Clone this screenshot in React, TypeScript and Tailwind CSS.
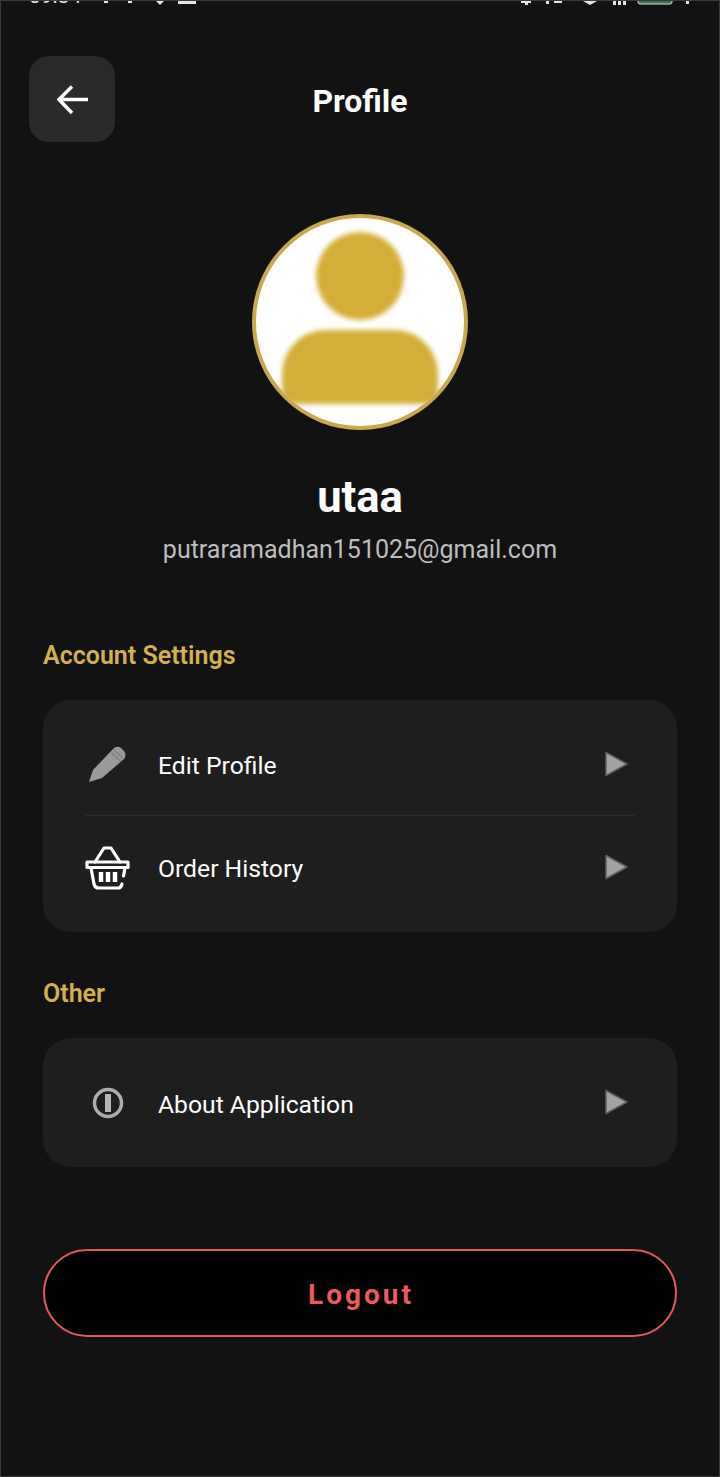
import { FC, ReactNode } from "react"

const Chevron = () => (
  <svg width="24" height="26" viewBox="0 0 24 26" className="shrink-0 mr-[7px] -mt-[2px]">
    <path d="M2 1.500 L23 13 L2 24.500 Z" fill="#a3a3a3" stroke="#5f5f5f" strokeWidth="1.500" strokeLinejoin="round" />
  </svg>
)

const PencilIcon = () => (
  <svg width="40" height="40" viewBox="0 0 40 40" className="-ml-[2px] -mt-[2px]">
    <path d="M2 38 L6 26 L26 5 Q30 1 34 4 L37 7 Q40 11 37 15 L15 34 Z" fill="#9a9a9a" />
    <path d="M27 6 L36 14 M24.500 9 L33.500 17" stroke="#828282" strokeWidth="1.500" fill="none" />
  </svg>
)

const BasketIcon = () => (
  <svg width="46" height="46" viewBox="0 0 46 46" fill="none" stroke="#fff" strokeWidth="3.200" strokeLinejoin="round" strokeLinecap="round">
    <path d="M10 17 L19 3 H26 L35 17" />
    <path d="M2 17 H43 V22.500 H2 Z" />
    <path d="M6 23 L9 39 Q10 43 14 43 H33 Q36 43 37 39 M38.500 31 L40 23" />
    <path d="M16 27 V37 M23 27 V37 M30 27 V37" strokeWidth="4.500" strokeLinecap="butt" />
  </svg>
)

const InfoIcon = () => (
  <svg width="32" height="32" viewBox="0 0 32 32" fill="none" className="-ml-[1px]">
    <circle cx="16" cy="16" r="13.500" stroke="#adadad" strokeWidth="3.500" />
    <rect x="13" y="7" width="6" height="18" fill="#b5b5b5" />
  </svg>
)

const StatusIconsLeft = () => (
  <svg width="110" height="5" viewBox="0 0 110 5" fill="#e5e5e5">
    <rect x="3" y="0" width="4" height="2" />
    <rect x="27" y="0" width="4" height="2" />
    <path d="M55 0 H63 L59 4 Z" />
    <rect x="77" y="0" width="18" height="3" />
  </svg>
)

const StatusIconsRight = () => (
  <svg width="170" height="5" viewBox="0 0 170 5" fill="#e5e5e5">
    <rect x="0" y="0" width="10" height="2" />
    <rect x="4" y="2" width="3" height="2" />
    <rect x="25" y="0" width="3" height="3" />
    <rect x="33" y="0" width="8" height="2" />
    <path d="M62 0 H76 L69 4 Z" />
    <rect x="92" y="0" width="3" height="4" />
    <rect x="97" y="0" width="3" height="4" />
    <rect x="102" y="0" width="3" height="4" />
    <path d="M117 0 V1 Q117 3 119 3 H149 Q151 3 151 1 V0" fill="#3f6f55" stroke="#cfe8d8" strokeWidth="1" />
    <rect x="165" y="0" width="3" height="3" />
  </svg>
)

const Row: FC<{ icon: ReactNode; label: string; className?: string }> = ({ icon, label, className }) => (
  <div className={`flex items-center ${className ?? ""}`}>
    <div className="w-[46px] flex justify-center shrink-0">{icon}</div>
    <span className="ml-[27px] flex-1 text-[24.700px] text-white pt-[2px]">{label}</span>
    <Chevron />
  </div>
)

export default function App() {
  return (
    <div
      className="w-[720px] h-[1477px] bg-[#121212] border border-[#3a3a3a] overflow-hidden flex flex-col"
      style={{ fontFamily: "Roboto, sans-serif" }}
    >
      {/* cut-off status bar */}
      <div className="h-[5px] overflow-hidden flex items-start px-[28px] text-[#e5e5e5] text-[21px] leading-[5px]">
        <span className="-mt-[7px] w-[72px]">09:34</span>
        <StatusIconsLeft />
        <span className="flex-1" />
        <StatusIconsRight />
      </div>

      <div className="relative mt-[50px] mx-[28px] flex items-center justify-center h-[86px]">
        <button className="absolute left-0 top-0 w-[86px] h-[86px] rounded-[20px] bg-[#2a2a2a] flex items-center justify-center pt-[4px] pl-[2px]">
          <svg width="32" height="32" viewBox="0 0 32 32" fill="none" stroke="#fff" strokeWidth="3.500">
            <path d="M31 14.500 H3 M15 1.500 L2 14.500 L15 28" />
          </svg>
        </button>
        <h1 className="text-[32px] font-bold text-white pt-[3px]">Profile</h1>
      </div>

      <div className="mt-[72px] flex flex-col items-center">
        <div className="w-[216px] h-[216px] rounded-full border-[4px] border-[#c9a94f] bg-white overflow-hidden flex flex-col items-center">
          <div className="mt-[14px] w-[88px] h-[88px] rounded-full bg-[#d4af37] blur-[2.500px]" />
          <div className="mt-[10px] w-[156px] h-[74px] rounded-t-[44px] bg-[#d4af37] blur-[2.500px]" />
        </div>
        <div className="mt-[43px] text-[43.500px] leading-[50px] font-bold text-white">utaa</div>
        <div className="mt-[11px] text-[25px] leading-[32px] text-[#bdbdbd]">putraramadhan151025@gmail.com</div>
      </div>

      <div className="mx-[42px] mt-[74px]">
        <h2 className="text-[25px] leading-[32px] font-semibold text-[#d4af50]">Account Settings</h2>
        <div className="mt-[28px] h-[232px] rounded-[28px] bg-[#1e1e1e] px-[42px] flex flex-col">
          <Row icon={<PencilIcon />} label="Edit Profile" className="h-[116px] pt-[14px] border-b border-[#2c2c2c]" />
          <Row icon={<BasketIcon />} label="Order History" className="h-[104px]" />
        </div>

        <h2 className="mt-[46px] text-[25px] leading-[32px] font-semibold text-[#d4af50]">Other</h2>
        <div className="mt-[28px] h-[129px] rounded-[28px] bg-[#1e1e1e] px-[42px] flex flex-col justify-center">
          <Row icon={<InfoIcon />} label="About Application" className="pt-[2px]" />
        </div>

        <button className="mt-[82px] w-full h-[88px] rounded-full bg-black border-2 border-[#e05a5a] text-[#e85c5c] text-[28px] font-bold tracking-[3px] pt-[3px] pl-[2px]">
          Logout
        </button>
      </div>
    </div>
  )
}
